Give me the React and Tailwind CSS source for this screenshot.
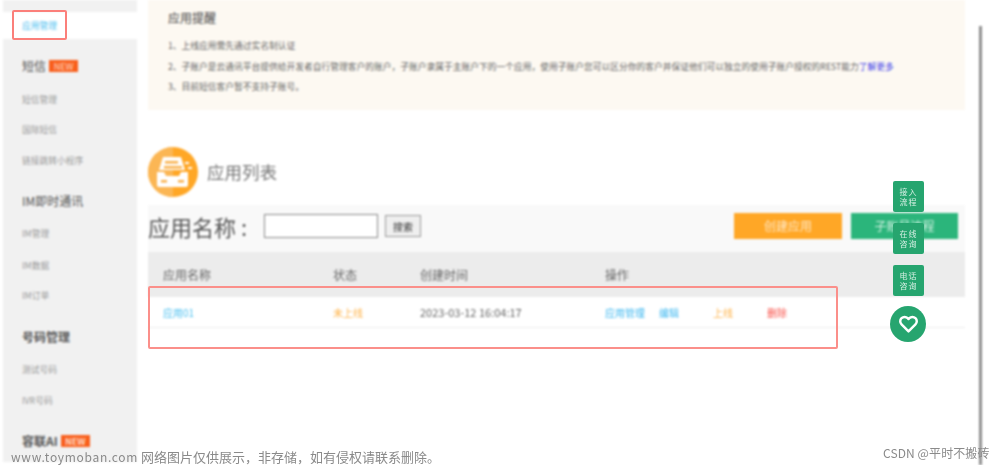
import React from "react";

const font = { fontFamily: '"Noto Sans CJK SC", "Liberation Sans", sans-serif' };

function New() {
  return <span className="flex h-[12px] w-[29px] items-center justify-center bg-[#f95f1c] text-[9px] leading-none text-[#ffd9c4]">NEW</span>;
}
function Head({ children, badge, className = "" }) {
  return (
    <div className={`flex h-[20px] items-center gap-[3px] pl-[19px] text-[12px] leading-[20px] text-[#555] ${className}`}>
      {children}
      {badge && <New />}
    </div>
  );
}
function Item({ children, className = "" }) {
  return <div className={`flex h-[14px] items-center pl-[19px] text-[8.75px] leading-[14px] text-[#999] ${className}`}>{children}</div>;
}
function Float({ a, b, className = "" }) {
  return (
    <div className={`absolute left-[893px] flex h-[31px] w-[31px] flex-col items-center justify-center rounded-[2px] bg-[#26a56f] text-[8px] leading-[10px] tracking-[1px] text-[#d5efe3] ${className}`}>
      <span>{a}</span>
      <span>{b}</span>
    </div>
  );
}

export default function App() {
  return (
    <div className="relative h-[465px] w-[1000px] overflow-hidden bg-white" style={font}>
      <div className="flex h-full blur-[0.8px]">
        <aside className="ml-[3px] flex h-[462px] w-[134px] flex-col bg-[#f1f1f1]">
          <div className="mt-[12px] flex h-[27px] items-center bg-white pl-[19px] text-[8.75px] text-[#4cc0f0]">应用管理</div>
          <Head badge className="mt-[17px]">短信</Head>
          <Item className="mt-[17px]">短信管理</Item>
          <Item className="mt-[16px]">国际短信</Item>
          <Item className="mt-[17px]">链接跳转小程序</Item>
          <Head className="mt-[23px]">IM即时通讯</Head>
          <Item className="mt-[16px]">IM管理</Item>
          <Item className="mt-[18px]">IM数据</Item>
          <Item className="mt-[16px]">IM订单</Item>
          <Head className="mt-[24px] font-bold">号码管理</Head>
          <Item className="mt-[16px]">测试号码</Item>
          <Item className="mt-[17px]">IVR号码</Item>
          <Head badge className="mt-[23px] font-bold">容联AI</Head>
        </aside>

        <main className="ml-[11px] flex w-[817px] flex-col">
          <section className="h-[110px] bg-[#fdf9f2] pl-[20px] pt-[9px]">
            <h2 className="text-[12px] leading-[18px] text-[#444]">应用提醒</h2>
            <ol className="mt-[12px] flex flex-col gap-[6.5px] text-[8.75px] leading-[14px] text-[#666]">
              <li>1、上线应用需先通过实名制认证</li>
              <li>
                2、子账户是云通讯平台提供给开发者自行管理客户的账户，子账户隶属于主账户下的一个应用，使用子账户您可以区分你的客户并保证他们可以独立的使用子账户授权的REST能力
                <span className="text-[#3a3ae8]">了解更多</span>
              </li>
              <li>3、目前短信客户暂不支持子账号。</li>
            </ol>
          </section>

          <div className="mt-[37px] flex h-[50px] items-center">
            <svg width="50" height="50" viewBox="0 0 50 50" className="shrink-0">
              <circle cx="25" cy="25" r="25" fill="#ffa726" />
              <path d="M25 0a25 25 0 0 0 0 50z" fill="#fbb654" />
              <path d="M15 10h18l4 13H11z" fill="#fff" />
              <rect x="17" y="14" width="13" height="2.5" fill="#f9b04a" />
              <rect x="16" y="19" width="18" height="2.5" fill="#f9b04a" />
              <path d="M9 25h7l2 4h13l2-4h7v13a2 2 0 0 1-2 2H11a2 2 0 0 1-2-2z" fill="#fff" />
              <rect x="13" y="33" width="6" height="2.5" fill="#f9b04a" />
              <rect x="30" y="33" width="6" height="2.5" fill="#f9b04a" />
              <rect x="37" y="15" width="4" height="2" fill="#fff" />
              <rect x="40" y="20" width="4" height="2" fill="#fff" />
            </svg>
            <span className="ml-[9px] text-[17.5px] text-[#777]">应用列表</span>
          </div>

          <div className="mt-[8px] flex h-[47px] items-center bg-[#f9f9f9] pb-[5px]">
            <span className="w-[116px] text-[22px] leading-none text-[#555]">应用名称 :</span>
            <input className="h-[24px] w-[114px] border border-[#888] bg-white" readOnly />
            <button className="ml-[7px] h-[22px] w-[36px] border border-[#999] bg-[#efefef] text-[10px] text-[#333]">搜索</button>
            <button className="ml-auto h-[26px] w-[108px] bg-[#ffa726] text-[12px] text-[#ffe9c8]">创建应用</button>
            <button className="ml-[9px] mr-[7px] h-[26px] w-[107px] bg-[#2bb57b] text-[12px] text-[#d8f2e5]">子账号流程</button>
          </div>

          <div className="flex h-[45px] items-center bg-[#ececec] pl-[15px] pt-[1px] text-[12px] text-[#666]">
            <span className="w-[170px]">应用名称</span>
            <span className="w-[87px]">状态</span>
            <span className="w-[185px]">创建时间</span>
            <span>操作</span>
          </div>

          <div className="flex h-[31px] items-center border-b border-[#ececec] pl-[15px] text-[10px]">
            <span className="w-[170px] text-[#4cc0f0]">应用01</span>
            <span className="w-[87px] text-[#ffb54d]">未上线</span>
            <span className="w-[185px] text-[11px] text-[#666]">2023-03-12 16:04:17</span>
            <span className="w-[54px] text-[#3fb8f0]">应用管理</span>
            <span className="w-[54px] text-[#3fb8f0]">编辑</span>
            <span className="w-[54px] text-[#ffb54d]">上线</span>
            <span className="text-[#f9574f]">删除</span>
          </div>
        </main>

        <div className="ml-[14px] mt-[26px] w-[3px] bg-[#8e8e8e]" />
      </div>

      <div className="absolute left-[12px] top-[10px] h-[30px] w-[55px] rounded-[2px] border-2 border-[#fb7f7a] blur-[0.4px]" />
      <div className="absolute left-[148px] top-[286px] h-[63px] w-[690px] rounded-[2px] border-2 border-[#fb8f8a] blur-[0.4px]" />

      <div className="absolute inset-0 blur-[0.7px]">
        <Float a="接入" b="流程" className="top-[181px]" />
        <Float a="在线" b="咨询" className="top-[223px]" />
        <Float a="电话" b="咨询" className="top-[265px]" />
        <div className="absolute left-[890px] top-[306px] flex h-[36px] w-[36px] items-center justify-center rounded-full bg-[#26a56f]">
          <svg width="21" height="18" viewBox="0 0 24 22" fill="none" stroke="#fff" strokeWidth="3" strokeLinejoin="round">
            <path d="M12 20 3.5 11.5a5.3 5.3 0 0 1 0-7.6 5.3 5.3 0 0 1 7.5 0l1 1 1-1a5.3 5.3 0 0 1 7.5 0 5.3 5.3 0 0 1 0 7.6z" />
          </svg>
        </div>
      </div>

      <div className="absolute left-[11px] top-[447px] whitespace-nowrap text-[13px] leading-[20px] text-[#8a8a8a]">
        <span className="text-[12px] tracking-[0.7px]">www.toymoban.com</span> 网络图片仅供展示，非存储，如有侵权请联系删除。
      </div>
      <div className="absolute left-[883px] top-[444px] whitespace-nowrap text-[12px] leading-[18px] tracking-[0.1px] text-[#8a8a8a]">CSDN @平时不搬砖</div>
    </div>
  );
}
